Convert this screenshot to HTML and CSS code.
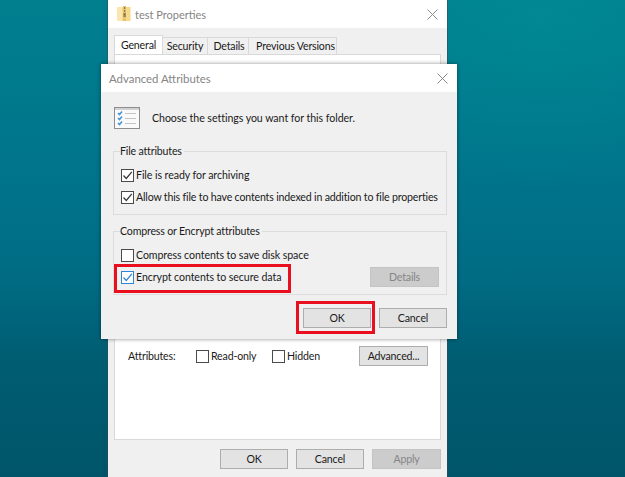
FILE: index.html
```html
<!DOCTYPE html>
<html lang="en">
<head>
<meta charset="utf-8">
<title>Advanced Attributes</title>
<link rel="stylesheet" href="styles.css">
</head>
<body>
<svg class="defs" width="0" height="0" aria-hidden="true"><symbol id="tick" viewBox="0 0 11 11"><path d="M1.500 5.500l2.800 3L9.800 1.800" fill="none" stroke="currentColor" stroke-width="1.300"/></symbol></svg>
<div class="desktop">
  <section class="window props">
    <header class="titlebar props-title">
      <svg class="folder" width="14" height="16" viewBox="0 0 14 16"><path d="M0 1h13.500v14H0z" fill="#f6d98a"/><path d="M0 1h5v14H0z" fill="#fbe7ae"/><path d="M6 0h3v15H6z" fill="#e7c56f"/><path d="M7 1h1.200v2H7zM7 4h1.200v2H7zM6.500 7h2.200v4H6.500z" fill="#8a7a55"/></svg>
      <span class="title-text">test Properties</span>
      <svg class="close" width="11" height="11" viewBox="0 0 11 11"><path d="M.5.5l10 10M10.500.5l-10 10" stroke="#8a8a8a" fill="none"/></svg>
    </header>
    <div class="props-body">
      <nav class="tabs">
        <span class="tab active">General</span>
        <span class="tab t-sec">Security</span>
        <span class="tab t-det">Details</span>
        <span class="tab t-prev">Previous Versions</span>
      </nav>
      <div class="panel">
        <div class="attr-row">
          <span class="attr-label">Attributes:</span>
          <label class="check c-ro"><i class="box"></i>Read-only</label>
          <label class="check"><i class="box"></i>Hidden</label>
          <button class="btn adv">Advanced...</button>
        </div>
      </div>
      <footer class="actions">
        <button class="btn">OK</button>
        <button class="btn">Cancel</button>
        <button class="btn off">Apply</button>
      </footer>
    </div>
  </section>

  <section class="window dialog">
    <header class="titlebar dialog-title">
      <span class="title-text">Advanced Attributes</span>
      <svg class="close" width="11" height="11" viewBox="0 0 11 11"><path d="M.5.5l10 10M10.500.5l-10 10" stroke="#8a8a8a" fill="none"/></svg>
    </header>
    <div class="dialog-body">
      <div class="intro">
        <svg class="list-icon" width="26" height="22" viewBox="0 0 26 22">
          <rect x=".5" y=".5" width="25" height="21" fill="#fafafa" stroke="#8d8d8d"/>
          <path d="M1 1h24v2H1z" fill="#d2d2d2"/>
          <path d="M4 6l1.500 1.500L8 4.500M4 11l1.500 1.500L8 9.500M4 16l1.500 1.500L8 14.500" stroke="#4c96d8" stroke-width="1.700" fill="none"/>
          <path d="M11 6.500h11M11 11.500h11M11 16.500h11" stroke="#c4c4c4"/>
        </svg>
        <span class="intro-text">Choose the settings you want for this folder.</span>
      </div>
      <fieldset class="group first">
        <legend>File attributes</legend>
        <label class="check row"><i class="box"><svg class="tick"><use href="#tick"/></svg></i><span class="loose">File is ready for archiving</span></label>
        <label class="check row"><i class="box"><svg class="tick"><use href="#tick"/></svg></i>Allow this file to have contents indexed in addition to file properties</label>
      </fieldset>
      <fieldset class="group second">
        <legend>Compress or Encrypt attributes</legend>
        <label class="check row"><i class="box"></i><span class="loose">Compress contents to save disk space</span></label>
        <div class="row split">
          <label class="check"><i class="box blue"><svg class="tick"><use href="#tick"/></svg></i><span class="loose">Encrypt contents to secure data</span></label>
          <button class="btn off">Details</button>
        </div>
      </fieldset>
      <footer class="actions dialog-actions">
        <button class="btn">OK</button>
        <button class="btn">Cancel</button>
      </footer>
    </div>
    <div class="mark mark-encrypt"></div>
    <div class="mark mark-ok"></div>
  </section>
</div>
</body>
</html>
```
FILE: styles.css
```css
* { box-sizing: border-box; }
html, body { margin: 0; padding: 0; }
body {
  width: 625px;
  height: 477px;
  overflow: hidden;
  font-family: "Lato", "Noto Sans", sans-serif;
  font-size: 10.600px;
  letter-spacing: -.17px;
  color: #1a1a1a;
}
.defs { position: absolute; }
.desktop {
  position: relative;
  width: 625px;
  height: 477px;
  overflow: hidden;
  background:
    radial-gradient(ellipse 260px 170px at 540px 20px, rgba(0, 150, 155, .4), rgba(0, 150, 155, 0)),
    linear-gradient(180deg, #007f8f 0%, #00738a 40%, #006c84 58%, #005d72 75%, #00556a 100%);
}
.window { position: absolute; display: flex; flex-direction: column; }
.props {
  left: 108px; top: 0; width: 339px; height: 477px;
  background: #f0f0f0;
  box-shadow: 0 0 0 1px rgba(60, 70, 80, .55);
}
.dialog {
  left: 101px; top: 64px; width: 356px; height: 275px;
  background: #f0f0f0;
  box-shadow: 0 0 4px rgba(0, 0, 0, .45);
}
.titlebar {
  height: 28px;
  flex: none;
  display: flex;
  align-items: center;
  background: #fff;
  color: #858585;
  letter-spacing: 0;
}
.props-title { padding: 0 9px 0 9px; font-size: 11px; }
.dialog-title { padding: 0 9px 0 8px; font-size: 11.400px; }
.folder { margin-right: 4px; }
.title-text { flex: 1; }
.props-body { flex: 1; display: flex; flex-direction: column; padding: 7px 6px 8px; min-height: 0; }
.tabs { display: flex; height: 19px; flex: none; align-items: flex-end; }
.tab {
  height: 17px;
  display: flex;
  align-items: center;
  justify-content: center;
  background: #f0f0f0;
  border: 1px solid #d9d9d9;
  border-bottom: 0;
  border-left: 0;
  white-space: nowrap;
}
.tab.active {
  height: 19px;
  width: 49px;
  background: #fff;
  border: 1px solid #d9d9d9;
  border-bottom: 0;
}
.t-sec { width: 45px; }
.t-det { width: 41px; padding-left: 2px; }
.t-prev { width: 88px; padding-left: 6px; }
.panel {
  flex: 1;
  background: #fff;
  border: 1px solid #d9d9d9;
  display: flex;
  flex-direction: column;
  padding: 291px 12px 0 13px;
  min-height: 0;
}
.attr-row { display: flex; align-items: center; height: 20px; }
.attr-label { width: 68px; }
.attr-row .check { width: 76px; }
.attr-row .adv { margin-left: auto; }
.actions { display: flex; justify-content: flex-end; gap: 8px; flex: none; padding-top: 9px; }
.btn {
  width: 68px;
  height: 20px;
  padding: 0;
  border: 1px solid #adadad;
  background: #e3e3e3;
  font: inherit;
  letter-spacing: inherit;
  color: #1a1a1a;
}
.btn.adv { width: 69px; }
.btn.off { width: 69px; background: #cccccc; border-color: #c4c4c4; color: #868686; }
.check { display: inline-flex; align-items: center; white-space: nowrap; }
.loose { letter-spacing: -.07px; }
.box {
  flex: none;
  display: block;
  width: 13px;
  height: 13px;
  margin-right: 2px;
  background: #fff;
  border: 1px solid #4a4a4a;
  color: #3a3a3a;
}
.tick { display: block; width: 11px; height: 11px; }
.box.blue { border-color: #2f86d6; color: #2f86d6; }
.dialog-body { flex: 1; display: flex; flex-direction: column; padding: 15px 10px 11px 12px; min-height: 0; }
.intro { display: flex; align-items: center; height: 22px; margin-left: 1px; flex: none; }
.intro-text { letter-spacing: -.05px; }
.list-icon { margin-right: 12px; }
.group {
  margin: 0;
  min-width: 0;
  padding: 5px 7px 0 7px;
  border: 1px solid #dcdcdc;
  display: flex;
  flex-direction: column;
  flex: none;
}
.group legend { padding: 0 2px 0 0; margin-left: -1px; line-height: 15px; }
.group.first { margin-top: 15px; height: 71px; }
.group.second { margin-top: 9px; height: 71px; }
.row { height: 22px; flex: none; }
.split { display: flex; align-items: center; justify-content: space-between; }
.dialog-actions { padding-top: 13px; }
.mark { position: absolute; border: 3px solid #e8101e; }
.mark-encrypt { left: 13px; top: 200px; width: 177px; height: 29px; }
.mark-ok { left: 195px; top: 237px; width: 79px; height: 33px; }
```
